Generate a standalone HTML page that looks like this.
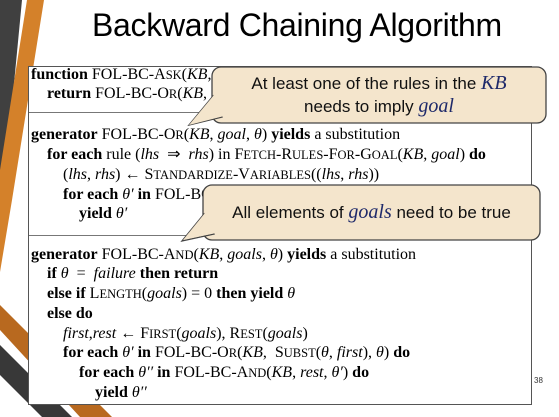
<!DOCTYPE html>
<html><head><meta charset="utf-8"><style>
body{margin:0;width:559px;height:417px;overflow:hidden;background:#fff;position:relative;font-family:"Liberation Serif",serif}
.t{position:absolute;left:92px;top:7px;font-family:"Liberation Sans",sans-serif;font-size:32px;color:#000;white-space:nowrap;letter-spacing:-0.3px}
.box{position:absolute;left:28px;top:66px;width:504px;height:339px;border:1.5px solid #555;background:#fff;box-sizing:border-box}
.l{position:absolute;font-size:16px;white-space:nowrap;color:#000;line-height:20px}
.sc{text-transform:uppercase;font-size:12.5px}
.hr{position:absolute;left:0;right:0;height:1px;background:#777}
.c{position:absolute;font-family:"Liberation Sans",sans-serif;font-size:17px;color:#111;text-align:center;white-space:nowrap}
i{font-family:"Liberation Serif",serif;font-style:italic}
.ci{color:#1f2a6a;font-family:"Liberation Serif",serif;font-size:20px;font-style:italic}
</style></head><body>
<svg width="559" height="417" style="position:absolute;left:0;top:0">
<polygon points="0,0 22,0 0,230" fill="#404040"/>
<polygon points="27,0 44,0 12,200 0,272 0,170" fill="#d4812a"/>
<polygon points="0,305 0,330 80,417 112,417" fill="#b8691f"/>
<polygon points="0,345 0,375 42,417 72,417" fill="#383838"/>
</svg>
<div class="t">Backward Chaining Algorithm</div>
<div class="box">
<div class="hr" style="top:45px"></div>
<div class="hr" style="top:168px"></div>
<div class="l" style="left:2px;top:-2px"><b>function</b> FOL-BC-A<span class="sc">sk</span>(<i>KB</i>, <i>query</i>) <b>returns</b> a generator</div>
<div class="l" style="left:18px;top:17px"><b>return</b> FOL-BC-O<span class="sc">r</span>(<i>KB</i>, <i>query</i>, { })</div>
<div class="l" style="left:2px;top:58px"><b>generator</b> FOL-BC-O<span class="sc">r</span>(<i>KB</i>, <i>goal</i>, <i>θ</i>) <b>yields</b> a substitution</div>
<div class="l" style="left:18px;top:78px"><b>for each</b> rule (<i>lhs</i> &nbsp;⇒&nbsp; <i>rhs</i>) in F<span class="sc">etch</span>-R<span class="sc">ules</span>-F<span class="sc">or</span>-G<span class="sc">oal</span>(<i>KB</i>, <i>goal</i>) <b>do</b></div>
<div class="l" style="left:34px;top:98px">(<i>lhs</i>, <i>rhs</i>) ← S<span class="sc">tandardize</span>-V<span class="sc">ariables</span>((<i>lhs</i>, <i>rhs</i>))</div>
<div class="l" style="left:34px;top:118px"><b>for each</b> <i>θ′</i> <b>in</b> FOL-BC-A<span class="sc">nd</span>(<i>KB</i>, <i>lhs</i>, U<span class="sc">nify</span>(<i>rhs</i>, <i>goal</i>, <i>θ</i>)) <b>do</b></div>
<div class="l" style="left:50px;top:137px"><b>yield</b> <i>θ′</i></div>
<div class="l" style="left:2px;top:178px"><b>generator</b> FOL-BC-A<span class="sc">nd</span>(<i>KB</i>, <i>goals</i>, <i>θ</i>) <b>yields</b> a substitution</div>
<div class="l" style="left:18px;top:197px"><b>if</b> <i>θ</i> &nbsp;= &nbsp;<i>failure</i> <b>then return</b></div>
<div class="l" style="left:18px;top:217px"><b>else if</b> L<span class="sc">ength</span>(<i>goals</i>) = 0 <b>then yield</b> <i>θ</i></div>
<div class="l" style="left:18px;top:237px"><b>else do</b></div>
<div class="l" style="left:34px;top:257px"><i>first</i>,<i>rest</i> ← F<span class="sc">irst</span>(<i>goals</i>), R<span class="sc">est</span>(<i>goals</i>)</div>
<div class="l" style="left:34px;top:276px"><b>for each</b> <i>θ′</i> <b>in</b> FOL-BC-O<span class="sc">r</span>(<i>KB</i>, &nbsp;S<span class="sc">ubst</span>(<i>θ</i>, <i>first</i>), <i>θ</i>) <b>do</b></div>
<div class="l" style="left:50px;top:296px"><b>for each</b> <i>θ′′</i> <b>in</b> FOL-BC-A<span class="sc">nd</span>(<i>KB</i>, <i>rest</i>, <i>θ′</i>) <b>do</b></div>
<div class="l" style="left:66px;top:316px"><b>yield</b> <i>θ′′</i></div>
</div>
<div style="position:absolute;left:534px;top:376px;font-size:8px;font-family:'Liberation Sans',sans-serif;color:#333">38</div>
<svg width="559" height="417" style="position:absolute;left:0;top:0">
<g fill="#f4e5cc" stroke="#444" stroke-width="1.3">
<rect x="212" y="67" width="334" height="56" rx="9"/>
<polygon points="213,96 189,125 222,117"/>
<rect x="203" y="185" width="337" height="55" rx="9"/>
<polygon points="204,214 182,241 214,234"/>
</g>
<polygon points="214,95 189,125 224,116 224,95" fill="#f4e5cc"/>
<polygon points="205,213 183,240 216,233 216,213" fill="#f4e5cc"/>
</svg>
<div class="c" style="left:212px;width:334px;top:72px">At least one of the rules in the <span class="ci">KB</span></div>
<div class="c" style="left:212px;width:334px;top:95px">needs to imply <span class="ci">goal</span></div>
<div class="c" style="left:203px;width:337px;top:201px">All elements of <span class="ci">goals</span> need to be true</div>
</body></html>
